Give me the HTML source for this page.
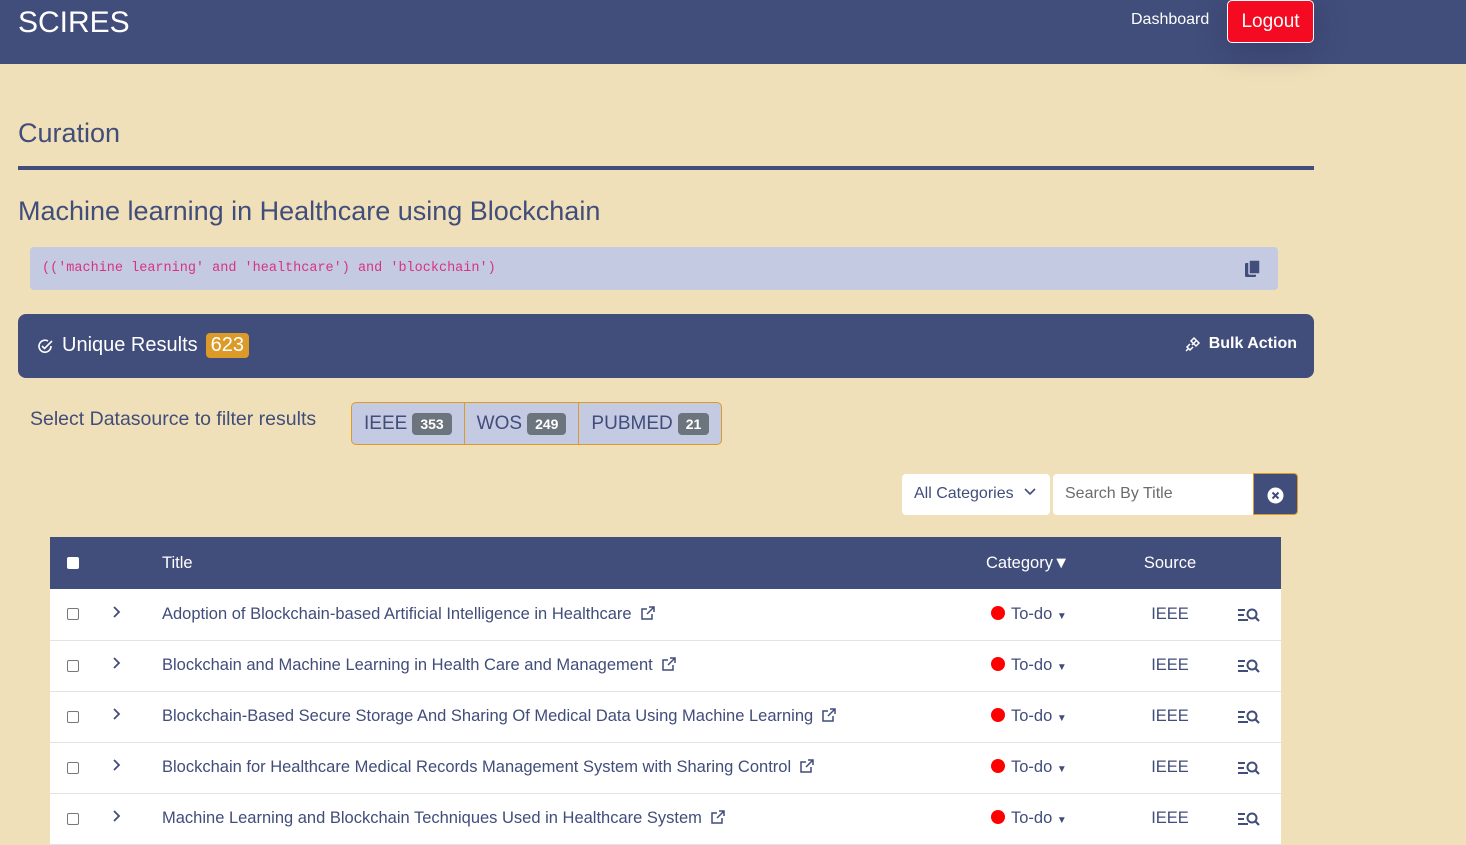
<!DOCTYPE html>
<html><head><meta charset="utf-8"><style>
*{box-sizing:border-box;margin:0;padding:0}
body{width:1466px;height:845px;overflow:hidden;background:#efe0b9;font-family:"Liberation Sans",sans-serif;color:#414d7a}
.nav{height:64px;background:#414d7a;position:relative}
.brand{position:absolute;left:18px;top:6px;color:#fff;font-size:30px}
.dash{position:absolute;left:1131px;top:11px;color:#fff;font-size:16px}
.logout{position:absolute;left:1227px;top:0;width:87px;height:43px;background:#f40b21;border:1px solid #fff;border-radius:5px;color:#fff;font-size:19px;text-align:center;line-height:41px;box-shadow:0 6px 30px rgba(40,40,80,.35)}
h1{position:absolute;left:18px;top:118px;font-size:27px;font-weight:normal}
.rule{position:absolute;left:18px;top:166px;width:1296px;height:4px;background:#414d7a}
h2{position:absolute;left:18px;top:196px;font-size:27px;font-weight:normal}
.query{position:absolute;left:30px;top:247px;width:1248px;height:43px;background:#c5cae3;border-radius:4px;font-family:"Liberation Mono",monospace;font-size:13.5px;color:#d63384;padding:14px 12px}
.copy{position:absolute;right:16px;top:12px}
.bar{position:absolute;left:18px;top:314px;width:1296px;height:64px;background:#414d7a;border-radius:8px;color:#fff}
.ur{position:absolute;left:18px;top:19px;font-size:20px;display:flex;align-items:center}
.badge{background:#dc9a28;border-radius:4px;padding:1px 5px;margin-left:8px}
.bulk{position:absolute;right:17px;top:21px;font-size:16px;font-weight:bold;display:flex;align-items:center}
.sel{position:absolute;left:30px;top:408px;font-size:19.5px}
.grp{position:absolute;left:351px;top:402px;height:43px;display:flex;border:1px solid #dc9a28;border-radius:5px;background:#c5cae3;overflow:hidden}
.grp div{padding:0 12px;display:flex;align-items:center;font-size:19px;border-right:1px solid #dc9a28}
.grp div:last-child{border-right:none}
.grp span{background:#6c757d;color:#fff;font-size:14px;font-weight:bold;border-radius:4px;padding:3px 8px;margin-left:5px}
.cat{position:absolute;left:902px;top:474px;width:148px;height:41px;background:#fff;border-radius:4px;font-size:16px;padding:11px 12px;white-space:nowrap}
.search{position:absolute;left:1053px;top:474px;width:200px;height:41px;background:#fff;border-radius:4px 0 0 4px;font-size:16px;color:#6c6c6c;padding:11px 12px}
.xbtn{position:absolute;left:1253px;top:473px;width:45px;height:42px;background:#414d7a;border:1px solid #dc9a28;border-radius:0 4px 4px 0}
.xbtn svg{position:absolute;left:13px;top:13px}
table{position:absolute;left:50px;top:537px;width:1231px;border-collapse:collapse;background:#fff;table-layout:fixed}
th{background:#414d7a;color:#fff;height:52px;font-weight:normal;font-size:16.5px;text-align:left}
td{height:51px;border-bottom:1px solid #e3e3e3;font-size:16.5px}
.cb{width:12px;height:12px;border:1px solid #777;border-radius:2px;display:inline-block;background:#fff;vertical-align:middle}
.dot{display:inline-block;width:14px;height:14px;border-radius:50%;background:#f00;vertical-align:-1px;margin-right:6px}
.c{text-align:center}
.ext{vertical-align:-2px;margin-left:8px}
.ic{padding-left:6px;padding-top:4px}
</style></head><body>
<div class="nav"><div class="brand">SCIRES</div><div class="dash">Dashboard</div><div class="logout">Logout</div></div>
<h1>Curation</h1><div class="rule"></div>
<h2>Machine learning in Healthcare using Blockchain</h2>
<div class="query">(('machine learning' and 'healthcare') and 'blockchain')<svg class="copy" width="18" height="20" viewBox="0 0 18 20"><rect x="1" y="4" width="11" height="14" rx="1" fill="#414d7a"/><rect x="5" y="1" width="11" height="14" rx="1" fill="#414d7a" stroke="#c5cae3" stroke-width="1.5"/></svg></div>
<div class="bar"><div class="ur"><svg width="18" height="18" viewBox="0 0 18 18" style="margin-right:8px"><path d="M15 9A6 6 0 1 1 12 4" fill="none" stroke="#fff" stroke-width="1.6"/><path d="M6 9l2.5 2.5L16 4" fill="none" stroke="#fff" stroke-width="1.6"/></svg>Unique Results <span class="badge">623</span></div><div class="bulk"><svg width="18" height="18" viewBox="0 0 18 18" style="margin-right:7px"><path d="M8 10l5-5M10 3l5 5-3 3-5-5zM6 9l-3 3 3 3 3-3M2 16l2-2" fill="none" stroke="#fff" stroke-width="1.5"/></svg>Bulk Action</div></div>
<div class="sel">Select Datasource to filter results</div>
<div class="grp"><div>IEEE<span>353</span></div><div>WOS<span>249</span></div><div>PUBMED<span>21</span></div></div>
<div class="cat">All Categories<svg width="12" height="8" viewBox="0 0 12 8" style="margin-left:10px;vertical-align:2px"><path d="M1 1l5 5 5-5" fill="none" stroke="#414d7a" stroke-width="1.6"/></svg></div><div class="search">Search By Title</div><div class="xbtn"><svg width="17" height="17" viewBox="0 0 17 17"><circle cx="8.5" cy="8.5" r="8" fill="#fff"/><path d="M5.5 5.5l6 6M11.5 5.5l-6 6" stroke="#414d7a" stroke-width="2"/></svg></div>
<table>
<colgroup><col style="width:47px"><col style="width:65px"><col><col style="width:124px"><col style="width:120px"><col style="width:51px"></colgroup>
<tr><th style="padding-left:17px"><span class="cb" style="border:none"></span></th><th></th><th>Title</th><th>Category▼</th><th class="c">Source</th><th></th></tr>
<tr><td style="padding-left:17px"><span class="cb"></span></td><td style="padding-left:14px"><svg width="10" height="14" viewBox="0 0 10 14"><path d="M3 2l5 5-5 5" fill="none" stroke="#414d7a" stroke-width="1.8"/></svg></td><td>Adoption of Blockchain-based Artificial Intelligence in Healthcare<svg class="ext" width="16" height="16" viewBox="0 0 16 16"><path d="M9 2h5v5M14 2L7 9M12 9v5H2V4h5" fill="none" stroke="#414d7a" stroke-width="1.5"/></svg></td><td style="padding-left:5px"><span class="dot"></span>To-do <span style="font-size:10px">▼</span></td><td class="c">IEEE</td><td class="ic"><svg width="26" height="18" viewBox="0 0 26 18"><path d="M2 5h7M2 10h6M2 15h10" stroke="#414d7a" stroke-width="2"/><circle cx="16" cy="9" r="4.5" fill="none" stroke="#414d7a" stroke-width="2"/><path d="M19 12l4 4" stroke="#414d7a" stroke-width="2.2"/></svg></td></tr>
<tr><td style="padding-left:17px"><span class="cb"></span></td><td style="padding-left:14px"><svg width="10" height="14" viewBox="0 0 10 14"><path d="M3 2l5 5-5 5" fill="none" stroke="#414d7a" stroke-width="1.8"/></svg></td><td>Blockchain and Machine Learning in Health Care and Management<svg class="ext" width="16" height="16" viewBox="0 0 16 16"><path d="M9 2h5v5M14 2L7 9M12 9v5H2V4h5" fill="none" stroke="#414d7a" stroke-width="1.5"/></svg></td><td style="padding-left:5px"><span class="dot"></span>To-do <span style="font-size:10px">▼</span></td><td class="c">IEEE</td><td class="ic"><svg width="26" height="18" viewBox="0 0 26 18"><path d="M2 5h7M2 10h6M2 15h10" stroke="#414d7a" stroke-width="2"/><circle cx="16" cy="9" r="4.5" fill="none" stroke="#414d7a" stroke-width="2"/><path d="M19 12l4 4" stroke="#414d7a" stroke-width="2.2"/></svg></td></tr>
<tr><td style="padding-left:17px"><span class="cb"></span></td><td style="padding-left:14px"><svg width="10" height="14" viewBox="0 0 10 14"><path d="M3 2l5 5-5 5" fill="none" stroke="#414d7a" stroke-width="1.8"/></svg></td><td>Blockchain-Based Secure Storage And Sharing Of Medical Data Using Machine Learning<svg class="ext" width="16" height="16" viewBox="0 0 16 16"><path d="M9 2h5v5M14 2L7 9M12 9v5H2V4h5" fill="none" stroke="#414d7a" stroke-width="1.5"/></svg></td><td style="padding-left:5px"><span class="dot"></span>To-do <span style="font-size:10px">▼</span></td><td class="c">IEEE</td><td class="ic"><svg width="26" height="18" viewBox="0 0 26 18"><path d="M2 5h7M2 10h6M2 15h10" stroke="#414d7a" stroke-width="2"/><circle cx="16" cy="9" r="4.5" fill="none" stroke="#414d7a" stroke-width="2"/><path d="M19 12l4 4" stroke="#414d7a" stroke-width="2.2"/></svg></td></tr>
<tr><td style="padding-left:17px"><span class="cb"></span></td><td style="padding-left:14px"><svg width="10" height="14" viewBox="0 0 10 14"><path d="M3 2l5 5-5 5" fill="none" stroke="#414d7a" stroke-width="1.8"/></svg></td><td>Blockchain for Healthcare Medical Records Management System with Sharing Control<svg class="ext" width="16" height="16" viewBox="0 0 16 16"><path d="M9 2h5v5M14 2L7 9M12 9v5H2V4h5" fill="none" stroke="#414d7a" stroke-width="1.5"/></svg></td><td style="padding-left:5px"><span class="dot"></span>To-do <span style="font-size:10px">▼</span></td><td class="c">IEEE</td><td class="ic"><svg width="26" height="18" viewBox="0 0 26 18"><path d="M2 5h7M2 10h6M2 15h10" stroke="#414d7a" stroke-width="2"/><circle cx="16" cy="9" r="4.5" fill="none" stroke="#414d7a" stroke-width="2"/><path d="M19 12l4 4" stroke="#414d7a" stroke-width="2.2"/></svg></td></tr>
<tr><td style="padding-left:17px"><span class="cb"></span></td><td style="padding-left:14px"><svg width="10" height="14" viewBox="0 0 10 14"><path d="M3 2l5 5-5 5" fill="none" stroke="#414d7a" stroke-width="1.8"/></svg></td><td>Machine Learning and Blockchain Techniques Used in Healthcare System<svg class="ext" width="16" height="16" viewBox="0 0 16 16"><path d="M9 2h5v5M14 2L7 9M12 9v5H2V4h5" fill="none" stroke="#414d7a" stroke-width="1.5"/></svg></td><td style="padding-left:5px"><span class="dot"></span>To-do <span style="font-size:10px">▼</span></td><td class="c">IEEE</td><td class="ic"><svg width="26" height="18" viewBox="0 0 26 18"><path d="M2 5h7M2 10h6M2 15h10" stroke="#414d7a" stroke-width="2"/><circle cx="16" cy="9" r="4.5" fill="none" stroke="#414d7a" stroke-width="2"/><path d="M19 12l4 4" stroke="#414d7a" stroke-width="2.2"/></svg></td></tr>
</table>
</body></html>
